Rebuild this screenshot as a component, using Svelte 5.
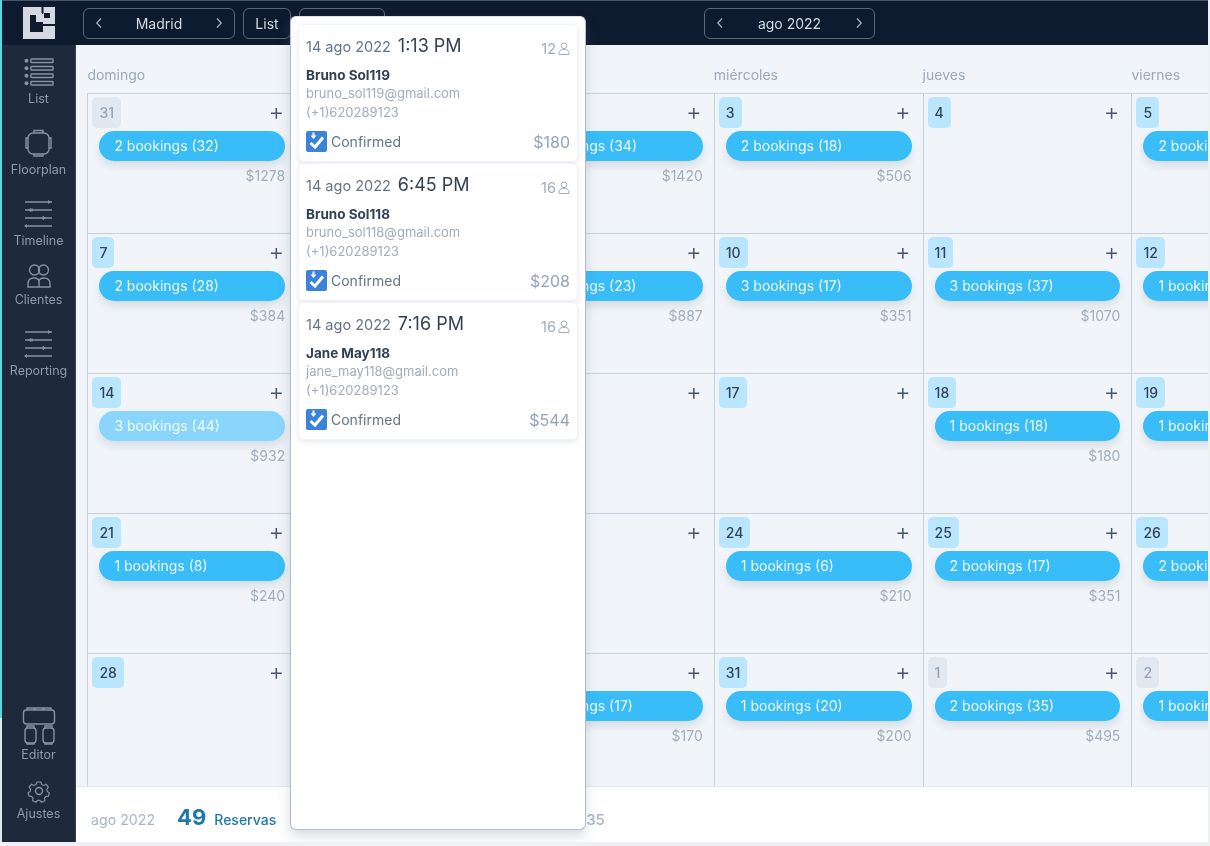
<script>
  const weekdays = ['domingo', 'lunes', 'martes', 'miércoles', 'jueves', 'viernes']

  const day = (n, bookings = null, guests = 0, total = 0, extra = {}) => ({ n, bookings, guests, total, ...extra })

  const weeks = [
    [day(31, 2, 32, 1278, { muted: true }), day(1), day(2, 2, 34, 1420), day(3, 2, 18, 506), day(4), day(5, 2, 21, 412)],
    [day(7, 2, 28, 384), day(8), day(9, 2, 23, 887), day(10, 3, 17, 351), day(11, 3, 37, 1070), day(12, 1, 12, 240)],
    [day(14, 3, 44, 932, { faded: true }), day(15), day(16), day(17), day(18, 1, 18, 180), day(19, 1, 9, 170)],
    [day(21, 1, 8, 240), day(22), day(23), day(24, 1, 6, 210), day(25, 2, 17, 351), day(26, 2, 14, 320)],
    [day(28), day(29), day(30, 2, 17, 170), day(31, 1, 20, 200), day(1, 2, 35, 495, { muted: true }), day(2, 1, 10, 150, { muted: true })]
  ]

  const bookings = [
    { time: '1:13 PM', seats: 12, name: 'Bruno Sol119', email: 'bruno_sol119@gmail.com', price: 180 },
    { time: '6:45 PM', seats: 16, name: 'Bruno Sol118', email: 'bruno_sol118@gmail.com', price: 208 },
    { time: '7:16 PM', seats: 16, name: 'Jane May118', email: 'jane_may118@gmail.com', price: 544 }
  ]
</script>

{#snippet chevron(dir)}
  <svg class="chev" width="8" height="12" viewBox="0 0 8 12">
    <path d={dir === 'left' ? 'M6 1.5 1.8 6 6 10.5' : 'M2 1.5 6.2 6 2 10.5'} />
  </svg>
{/snippet}

{#snippet sliders()}
  <svg class="icon" width="40" height="32" viewBox="0 0 40 32">
    <g class="thin">
      <path d="M6 3H33M6 11H33M6 19H33M6 27H33" />
      <path d="M29 1v4l3-2zM12 9v4l-3-2zM24 17v4l3-2zM8 25v4l-3-2z" class="solid" />
      <path d="M13 9.5v3M24 17.5v3" />
    </g>
  </svg>
{/snippet}

<div class="page">
  <header class="topbar">
    <div class="logo">
      <svg width="33" height="32" viewBox="0 0 33 32">
        <rect class="logo-fill" width="32" height="32" />
        <path class="logo-dark" d="M7 8H13V15H20V25H7ZM18.500 0H20.500V7H18.500ZM21 6H27V11H21ZM20 17H32V19H20Z" />
        <rect class="logo-fill" x="13" y="6" width="6" height="8" />
      </svg>
    </div>
    <div class="nav-btn madrid">{@render chevron('left')}<span>Madrid</span>{@render chevron('right')}</div>
    <div class="nav-btn list">List</div>
    <div class="nav-btn third"></div>
    <div class="nav-btn month">{@render chevron('left')}<span>ago 2022</span>{@render chevron('right')}</div>
  </header>

  <div class="body">
    <nav class="sidebar">
      <div class="item first">
        <svg class="icon" width="40" height="32" viewBox="0 0 40 32">
          <g class="thin">
            <rect x="12" y="2" width="22" height="3.5" rx=".5" />
            <rect x="12" y="9.5" width="22" height="3.5" rx=".5" />
            <rect x="12" y="17" width="22" height="3.5" rx=".5" />
            <rect x="12" y="24.5" width="22" height="3.5" rx=".5" />
          </g>
          <g class="solid">
            <circle cx="7.5" cy="3.7" r="2" /><circle cx="7.5" cy="11.2" r="2" />
            <circle cx="7.5" cy="18.7" r="2" /><circle cx="7.5" cy="26.2" r="2" />
          </g>
        </svg>
        <span>List</span>
      </div>
      <div class="item">
        <svg class="icon" width="40" height="32" viewBox="0 0 40 32">
          <g class="thin">
            <rect x="9" y="5" width="21" height="21" rx="5" />
            <path d="M15 5V2.500h9V5M15 26v2h9v-2M9 10H7v10h2M30 10h2v10h-2" />
          </g>
        </svg>
        <span>Floorplan</span>
      </div>
      <div class="item">{@render sliders()}<span>Timeline</span></div>
      <div class="item short">
        <svg class="icon" width="40" height="32" viewBox="0 0 40 32">
          <g class="thin">
            <circle cx="15.500" cy="12" r="5" />
            <circle cx="24.500" cy="12" r="5" />
            <path d="M9 29v-3c0-4 2.500-6 6-6s5 1 5 4v5ZM20 24c0-3 1.500-4 5-4s6 2 6 6v3H9" />
          </g>
        </svg>
        <span>Clientes</span>
      </div>
      <div class="item">{@render sliders()}<span>Reporting</span></div>

      <div class="bottom">
        <div class="item editor">
          <svg class="icon" width="40" height="38" viewBox="0 0 40 38">
            <g class="thin">
              <rect x="4.500" y="3" width="31" height="14" rx="3" />
              <path d="M8 3V1h7v2M16 3V1h8v2M25 3V1h7v2" />
              <rect x="6" y="21" width="11" height="15" rx="3" />
              <rect x="24" y="21" width="11" height="15" rx="3" />
              <path d="M8 21v-2h7v2M26 21v-2h7v2M8 36v1h7v-1M26 36v1h7v-1" />
            </g>
          </svg>
          <span>Editor</span>
        </div>
        <div class="item settings">
          <svg class="icon" width="40" height="26" viewBox="0 0 40 26">
            <g class="thin">
              <path d="M17.600 2h4.800l.8 3 2.600 1.200 2.800-1.400 2.800 3.400-1.800 2.600.5 2.700 2.400 1.500-1 4.200-3 .2-1.800 2.200.5 3-4 1.800-2-2.300h-2.800l-2 2.300-4-1.800.5-3-1.800-2.200-3-.2-1-4.200 2.400-1.500.5-2.700-1.800-2.600 2.800-3.400 2.800 1.400 2.600-1.200Z" transform="translate(3.300 2.300) scale(.83)" />
              <circle cx="20" cy="13" r="3.500" />
            </g>
          </svg>
          <span>Ajustes</span>
        </div>
      </div>
    </nav>

    <main class="main">
      <div class="calendar">
        <div class="weekdays">
          {#each weekdays as name}
            <div>{name}</div>
          {/each}
        </div>
        <div class="grid">
          {#each weeks as week}
            {#each week as d}
              <div class="cell">
                <div class="cell-head">
                  <span class="chip" class:muted={d.muted}>{d.n}</span>
                  <span class="plus">+</span>
                </div>
                {#if d.bookings}
                  <div class="pill" class:faded={d.faded}>{d.bookings} bookings ({d.guests})</div>
                  <div class="total">${d.total}</div>
                {/if}
              </div>
            {/each}
          {/each}
        </div>
      </div>

      <footer class="summary">
        <span class="period">ago 2022</span>
        <strong>49</strong>
        <span class="unit">Reservas</span>
        <span class="other">35</span>
      </footer>
    </main>
  </div>

  <div class="popover">
    {#each bookings as b}
      <article class="booking">
        <div class="row-top">
          <span class="date">14 ago 2022</span>
          <span class="time">{b.time}</span>
          <span class="seats">
            {b.seats}
            <svg width="12" height="13" viewBox="0 0 12 13">
              <circle cx="6" cy="3.800" r="2.800" />
              <path d="M1 12.500V11c0-2 1.500-3.500 3.500-3.500h3c2 0 3.500 1.500 3.500 3.500v1.500Z" />
            </svg>
          </span>
        </div>
        <div class="name">{b.name}</div>
        <div class="contact">{b.email}</div>
        <div class="contact">(+1)620289123</div>
        <div class="row-bottom">
          <svg width="21" height="21" viewBox="0 0 21 21">
            <rect width="21" height="21" rx="2" fill="#3b82d9" />
            <path d="M4.500 12 9 16 17 6.500" fill="none" stroke="#fff" stroke-width="3" />
            <path d="M6.500 1.500h2v3h2L7.500 8l-3-3.500h2Z" fill="#fff" />
          </svg>
          <span class="status">Confirmed</span>
          <span class="price">${b.price}</span>
        </div>
      </article>
    {/each}
  </div>
</div>

<style>
  :global(body) {
    background: #eef0f3;
    font-family: Inter, "Noto Sans", sans-serif;
  }

  .page {
    position: relative;
    width: 1208px;
    height: 842px;
    padding-left: 2px;
    box-sizing: border-box;
    display: flex;
    flex-direction: column;
    overflow: hidden;
    background: linear-gradient(#57d9e3 718px, #e2e8f0 718px);
    filter: blur(0.4px);
  }

  .topbar {
    height: 44px;
    flex-shrink: 0;
    display: flex;
    align-items: center;
    background: #0e1a2e;
    border-top: 1px solid #475569;
  }
  .logo {
    width: 76px;
    display: flex;
    justify-content: center;
    padding-right: 3px;
    padding-left: 1px;
    box-sizing: border-box;
  }
  .logo-fill { fill: #d5d9df; }
  .logo-dark { fill: #0e1a2e; }

  .nav-btn {
    height: 31px;
    box-sizing: border-box;
    display: flex;
    align-items: center;
    justify-content: space-between;
    border: 1px solid #5b687a;
    border-radius: 6px;
    color: #d3dae3;
    font-size: 14px;
  }
  .madrid { width: 152px; margin-left: 5px; padding: 0 11px; }
  .list { width: 48px; margin-left: 8px; justify-content: center; }
  .third { width: 86px; margin-left: 8px; }
  .month { width: 171px; margin-left: 319px; padding: 0 11px; }
  .chev { fill: none; stroke: #a3aebd; stroke-width: 1.3; }

  .body { flex: 1; display: flex; min-height: 0; }

  .sidebar {
    width: 74px;
    flex-shrink: 0;
    display: flex;
    flex-direction: column;
    background: #1e293b;
    border-right: 1px solid #334155;
    box-sizing: border-box;
    color: #8e9bad;
    font-size: 12.500px;
  }
  .item {
    height: 71px;
    display: flex;
    flex-direction: column;
    align-items: center;
    justify-content: flex-end;
    gap: 2px;
    line-height: 16px;
  }
  .item.first { height: 61.500px; }
  .item.short { height: 59px; }
  .bottom {
    margin-top: auto;
    padding-bottom: 20px;
  }
  .item.editor { height: auto; }
  .item.settings { height: 59px; }

  .icon { display: block; }
  .thin { fill: none; stroke: #8692a4; stroke-width: 1.4; }
  .solid { fill: #8692a4; stroke: none; }

  .main {
    flex: 1;
    min-width: 0;
    display: flex;
    flex-direction: column;
    background: #fff;
  }
  .calendar {
    height: 741px;
    padding-left: 11.400px;
    background: #f1f5f9;
    box-sizing: border-box;
    overflow: hidden;
  }
  .weekdays {
    height: 48px;
    padding-top: 21px;
    box-sizing: border-box;
    display: grid;
    grid-template-columns: repeat(6, 208.800px);
    color: #9ca8b8;
    font-size: 14px;
    line-height: 18px;
  }
  .grid {
    display: grid;
    grid-template-columns: repeat(6, 208.800px);
    grid-auto-rows: 140px;
    border-top: 1px solid #c6d0dc;
  }
  .cell {
    border-left: 1px solid #c6d0dc;
    border-bottom: 1px solid #c6d0dc;
    box-sizing: border-box;
    padding: 3px 11px 0 4px;
  }
  .cell-head {
    display: flex;
    align-items: center;
    justify-content: space-between;
  }
  .chip {
    height: 31px;
    padding: 0 7px;
    display: flex;
    align-items: center;
    justify-content: center;
    border-radius: 5px;
    background: #bae6fd;
    color: #334155;
    font-size: 14px;
    font-weight: 500;
  }
  .chip.muted { background: #e2e8f0; color: #94a3b8; }
  .plus {
    color: #475569;
    font-size: 24px;
    font-weight: 300;
    line-height: 24px;
    margin: -2px 1px 0 0;
  }
  .pill {
    height: 30px;
    margin: 3px 0 0 7px;
    padding-left: 15px;
    border-radius: 15px;
    background: #38bdf8;
    color: #f0f9ff;
    font-size: 14px;
    line-height: 30px;
    white-space: nowrap;
    box-shadow: 0 5px 9px rgba(100, 116, 139, 0.18);
  }
  .pill.faded { background: #8ad6fa; }
  .total {
    margin-top: 6px;
    text-align: right;
    color: #a1adbc;
    font-size: 14px;
    line-height: 18px;
  }

  .summary {
    flex: 1;
    display: flex;
    align-items: baseline;
    padding: 17px 0 0 15px;
    box-sizing: border-box;
    border-top: 1px solid #e2e8f0;
    color: #1f78ac;
  }
  .period { color: #a8b5c6; font-size: 14.200px; }
  .summary strong { margin-left: 22px; font-size: 22px; font-weight: 700; }
  .unit { margin-left: 8px; font-size: 14px; font-weight: 500; }
  .other { margin-left: 310px; color: #a8b5c6; font-size: 15px; font-weight: 500; }

  .popover {
    position: absolute;
    left: 290px;
    top: 16px;
    width: 296px;
    height: 814px;
    box-sizing: border-box;
    padding: 7px 7px 0;
    background: #fff;
    border: 1px solid #b4bfcd;
    border-top-color: #dbe1e8;
    border-radius: 6px;
    box-shadow: 0 6px 12px rgba(100, 116, 139, 0.25);
    display: flex;
    flex-direction: column;
    gap: 1px;
  }
  .booking {
    height: 138px;
    box-sizing: border-box;
    padding: 10px 7px 0;
    background: #fff;
    border: 1px solid #f1f5f9;
    border-radius: 6px;
    box-shadow: 0 2px 5px rgba(100, 116, 139, 0.16);
  }
  .row-top {
    display: flex;
    align-items: center;
    height: 22px;
  }
  .date { color: #64748b; font-size: 14.500px; }
  .time { margin-left: 7px; color: #334155; font-size: 18px; position: relative; top: -1px; }
  .seats {
    margin-left: auto;
    display: flex;
    align-items: center;
    gap: 2px;
    color: #a1adbc;
    font-size: 14.500px;
    padding-top: 4px;
  }
  .seats svg { fill: none; stroke: #a1adbc; stroke-width: 1; }
  .name {
    margin-top: 9px;
    color: #334155;
    font-size: 13.500px;
    font-weight: 700;
    line-height: 18px;
  }
  .contact {
    margin-top: 1px;
    color: #a1adbc;
    font-size: 13px;
    line-height: 18px;
  }
  .name + .contact { margin-top: 0; }
  .row-bottom {
    margin-top: 10px;
    display: flex;
    align-items: center;
    gap: 4px;
  }
  .status { color: #64748b; font-size: 14px; }
  .price {
    margin-left: auto;
    color: #94a3b8;
    font-size: 16px;
  }
</style>
